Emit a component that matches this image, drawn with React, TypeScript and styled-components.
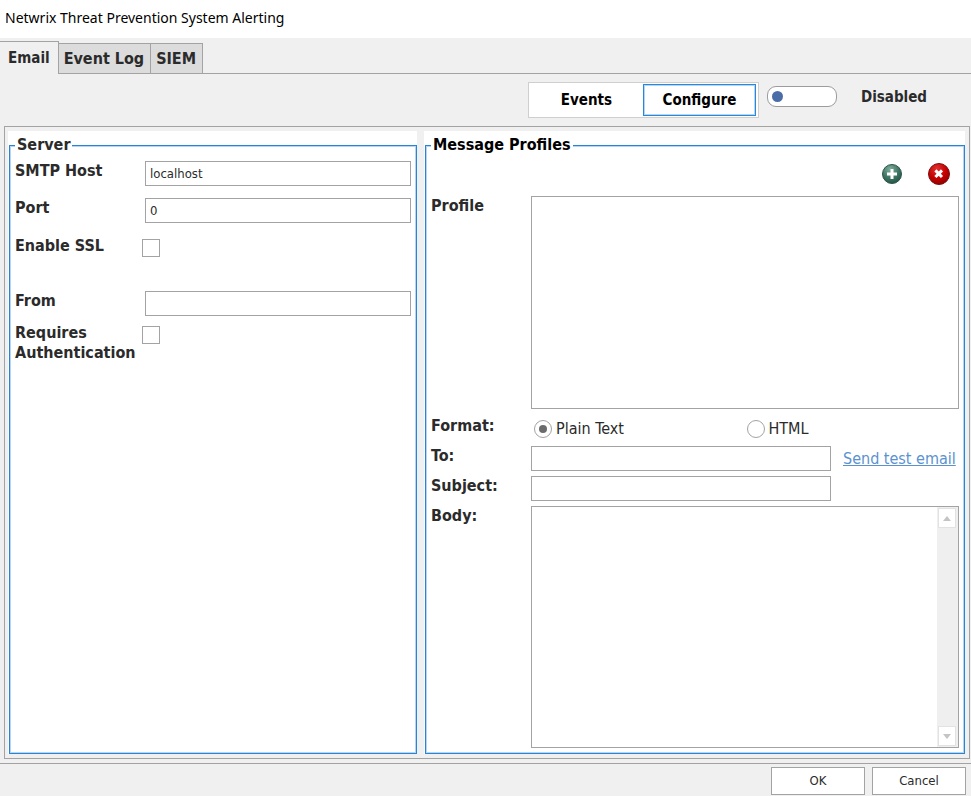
import React, { useState } from "react";
import styled, { createGlobalStyle } from "styled-components";

const GlobalStyle = createGlobalStyle`
  *, *::before, *::after { box-sizing: border-box; }
  html, body, #root { height: 100%; }
  body {
    margin: 0;
    background: #f0f0f0;
    color: #2b2b2b;
    font-family: "DejaVu Sans Condensed", "Noto Sans", sans-serif;
    font-size: 16px;
    line-height: 20px;
  }
  button, input, textarea, select { font: inherit; color: inherit; }
`;

const line = "#a3a3a3";
const blue = "#2a84d2";
const paleBlue = "#b4d6f4";

const Window = styled.div`
  display: flex;
  flex-direction: column;
  min-height: 100%;
`;

const TitleBar = styled.header`
  height: 38px;
  padding: 8px 5px;
  background: #fff;
`;

const Title = styled.h1`
  margin: 0;
  color: #000;
  font: 14px/20px "Noto Sans", sans-serif;
`;

const TabStrip = styled.div`
  display: flex;
  align-items: flex-end;
  height: 36px;
  border-bottom: 1px solid ${line};
`;

const Tab = styled.button<{ $active?: boolean }>`
  height: ${(p) => (p.$active ? 33 : 31)}px;
  margin-bottom: -1px;
  padding: ${(p) => (p.$active ? "0 8px 0" : "1px 6px 0 5px")};
  border: 1px solid ${line};
  border-left-width: ${(p) => (p.$active ? 0 : 1)}px;
  border-bottom-color: ${(p) => (p.$active ? "#f0f0f0" : line)};
  background: ${(p) => (p.$active ? "#f0f0f0" : "#dcdcdc")};
  font-size: ${(p) => (p.$active ? 15 : 16)}px;
  font-weight: bold;

  & + & { margin-left: -1px; }
`;

const Toolbar = styled.div`
  display: flex;
  align-items: flex-start;
  justify-content: flex-end;
  height: 52px;
  padding: 8px 44px 0 0;
  font-size: 15px;
`;

const Segments = styled.div`
  display: flex;
  height: 36px;
  padding: 1px 2px 1px 1px;
  border: 1px solid #cfcfcf;
  background: #fff;
`;

const Segment = styled.button<{ $active?: boolean }>`
  width: 113px;
  padding: 0;
  border: 1px solid ${(p) => (p.$active ? "#2b86d9" : "transparent")};
  box-shadow: inset 0 0 0 1px ${(p) => (p.$active ? paleBlue : "transparent")};
  background: #fff;
  color: #000;
  font-weight: bold;
`;

const SwitchLabel = styled.label`
  display: flex;
  align-items: center;
  gap: 24px;
  margin: 4px 0 0 8px;
  font-weight: bold;
`;

const Switch = styled.input`
  appearance: none;
  width: 70px;
  height: 21px;
  margin: 0;
  padding: 4px;
  border: 1px solid #9c9c9c;
  border-radius: 9px;
  background: #fff;

  &::before {
    content: "";
    display: block;
    width: 11px;
    height: 11px;
    border-radius: 50%;
    background: #4a6da7;
  }
  &:checked::before { margin-left: auto; }
`;

const Panels = styled.main`
  flex: 1;
  display: grid;
  grid-template-columns: 409fr 541fr;
  gap: 7px;
  margin: 0 1px 4px 4px;
  padding: 4px 4px 4px 3px;
  border: 1px solid ${line};
`;

const Panel = styled.section`
  display: flex;
  min-width: 0;
  padding: 4px 0 0 1px;
  background: #fff;
`;

const Group = styled.fieldset`
  flex: 1;
  min-width: 0;
  display: flex;
  flex-direction: column;
  margin: 0;
  padding: 6px 5px 5px;
  border: 1px solid ${blue};
  box-shadow: inset 0 0 0 1px ${paleBlue};
`;

const Legend = styled.legend<{ $strong?: boolean }>`
  padding: 0 2px;
  background: #fff;
  color: ${(p) => (p.$strong ? "#000" : "#2b2b2b")};
  font-weight: bold;
`;

const FieldGrid = styled.div`
  display: grid;
  grid-template-columns: 128px 1fr;
  column-gap: 2px;
  grid-template-rows: 37px 38px 55px 32px 40px;
  align-items: start;
`;

const FieldLabel = styled.label`
  font-weight: bold;
`;

const TextField = styled.input`
  width: 100%;
  min-width: 0;
  height: 25px;
  padding: 0 4px;
  border: 1px solid ${line};
  border-radius: 0;
  background: #fff;
  font-size: 13px;
`;

const CheckBox = styled.input`
  appearance: none;
  width: 18px;
  height: 18px;
  margin: 3px 0 0 -3px;
  border: 1px solid ${line};
  background: #fff;

  &:checked { background: #6b6b6b; box-shadow: inset 0 0 0 3px #fff; }
`;

const ProfileActions = styled.div`
  display: flex;
  justify-content: flex-end;
  gap: 23px;
  padding: 1px 8px 0 0;
  height: 35px;
`;

const IconButton = styled.button`
  display: block;
  width: 24px;
  height: 24px;
  padding: 0;
  border: 0;
  background: none;
`;

const ProfileGrid = styled.div`
  flex: 1;
  display: grid;
  grid-template-columns: 100px 1fr 128px;
  grid-template-rows: 220px 30px 30px 30px minmax(120px, 1fr);
  align-items: start;
`;

const ProfileList = styled.select`
  grid-column: 2 / -1;
  width: 100%;
  height: 213px;
  border: 1px solid ${line};
  border-radius: 0;
  background: #fff;
`;

const RadioRow = styled.div`
  grid-column: 2 / -1;
  display: grid;
  grid-template-columns: 1fr 1fr;
  padding: 3px 0 0 3px;
`;

const RadioLabel = styled.label`
  display: flex;
  align-items: center;
  gap: 4px;
`;

const Radio = styled.input`
  appearance: none;
  display: grid;
  place-items: center;
  width: 18px;
  height: 18px;
  margin: 0;
  border: 1px solid ${line};
  border-radius: 50%;
  background: #fff;

  &:checked::before {
    content: "";
    width: 8px;
    height: 8px;
    border-radius: 50%;
    background: #6b6b6b;
  }
`;

const TestLink = styled.a`
  padding: 3px 0 0 12px;
  color: #5a92cf;
  white-space: nowrap;
`;

const BodyBox = styled.div`
  grid-column: 2 / -1;
  align-self: stretch;
  display: flex;
  border: 1px solid ${line};
  background: #fff;
`;

const BodyText = styled.textarea`
  flex: 1;
  min-width: 0;
  padding: 4px;
  border: 0;
  outline: 0;
  resize: none;
  background: #fff;
`;

const ScrollTrack = styled.div`
  display: flex;
  flex-direction: column;
  justify-content: space-between;
  width: 21px;
  padding: 1px;
  background: #efefef;
`;

const ScrollButton = styled.button`
  display: grid;
  place-items: center;
  width: 18px;
  height: 20px;
  padding: 0;
  border: 1px solid #e2e2e2;
  background: #fff;
`;

const Footer = styled.footer`
  display: flex;
  justify-content: flex-end;
  gap: 7px;
  padding: 3px 5px 1px;
  border-top: 1px solid ${line};
`;

const DialogButton = styled.button`
  width: 94px;
  height: 28px;
  padding: 0;
  border: 1px solid ${line};
  background: #fff;
  font-size: 13px;
`;

const AddIcon = () => (
  <svg width="24" height="24" viewBox="0 0 24 24" aria-hidden="true">
    <defs>
      <radialGradient id="addFill" cx="40%" cy="25%" r="75%">
        <stop offset="0" stopColor="#7fae9c" />
        <stop offset="0.6" stopColor="#3f7464" />
        <stop offset="1" stopColor="#25584a" />
      </radialGradient>
    </defs>
    <circle cx="12" cy="12" r="9.5" fill="url(#addFill)" stroke="#2c5548" />
    <path d="M12 7v10M7 12h10" stroke="#fff" strokeWidth="3" />
  </svg>
);

const RemoveIcon = () => (
  <svg width="24" height="24" viewBox="0 0 24 24" aria-hidden="true">
    <defs>
      <radialGradient id="removeFill" cx="40%" cy="25%" r="75%">
        <stop offset="0" stopColor="#e03030" />
        <stop offset="0.6" stopColor="#c50000" />
        <stop offset="1" stopColor="#950000" />
      </radialGradient>
    </defs>
    <circle cx="12" cy="12" r="10.5" fill="url(#removeFill)" stroke="#7c1010" />
    <path d="M8.4 8.4l6.6 6.6M15 8.4l-6.6 6.6" stroke="#fff" strokeWidth="3" />
  </svg>
);

const Arrow = ({ down }: { down?: boolean }) => (
  <svg width="8" height="5" viewBox="0 0 8 5" aria-hidden="true">
    <path d={down ? "M0 0h8L4 5z" : "M0 5h8L4 0z"} fill="#c4c4c4" />
  </svg>
);

export default function App() {
  const [format, setFormat] = useState("plain");
  return (
    <>
      <GlobalStyle />
      <Window>
        <TitleBar>
          <Title>Netwrix Threat Prevention System Alerting</Title>
        </TitleBar>
        <TabStrip role="tablist">
          <Tab role="tab" aria-selected="true" $active>Email</Tab>
          <Tab role="tab" aria-selected="false">Event Log</Tab>
          <Tab role="tab" aria-selected="false">SIEM</Tab>
        </TabStrip>
        <Toolbar>
          <Segments>
            <Segment>Events</Segment>
            <Segment $active>Configure</Segment>
          </Segments>
          <SwitchLabel>
            <Switch type="checkbox" role="switch" />
            Disabled
          </SwitchLabel>
        </Toolbar>
        <Panels>
          <Panel>
            <Group>
              <Legend>Server</Legend>
              <FieldGrid>
                <FieldLabel htmlFor="host">SMTP Host</FieldLabel>
                <TextField id="host" type="text" defaultValue="localhost" />
                <FieldLabel htmlFor="port">Port</FieldLabel>
                <TextField id="port" type="text" defaultValue="0" />
                <FieldLabel htmlFor="ssl">Enable SSL</FieldLabel>
                <CheckBox id="ssl" type="checkbox" />
                <FieldLabel htmlFor="from">From</FieldLabel>
                <TextField id="from" type="text" />
                <FieldLabel htmlFor="auth">Requires Authentication</FieldLabel>
                <CheckBox id="auth" type="checkbox" />
              </FieldGrid>
            </Group>
          </Panel>
          <Panel>
            <Group>
              <Legend $strong>Message Profiles</Legend>
              <ProfileActions>
                <IconButton type="button" aria-label="Add profile"><AddIcon /></IconButton>
                <IconButton type="button" aria-label="Remove profile"><RemoveIcon /></IconButton>
              </ProfileActions>
              <ProfileGrid>
                <FieldLabel htmlFor="profile">Profile</FieldLabel>
                <ProfileList id="profile" size={10} />
                <FieldLabel as="span" id="format">Format:</FieldLabel>
                <RadioRow role="radiogroup" aria-labelledby="format">
                  <RadioLabel>
                    <Radio type="radio" name="format" checked={format === "plain"} onChange={() => setFormat("plain")} />
                    Plain Text
                  </RadioLabel>
                  <RadioLabel>
                    <Radio type="radio" name="format" checked={format === "html"} onChange={() => setFormat("html")} />
                    HTML
                  </RadioLabel>
                </RadioRow>
                <FieldLabel htmlFor="to">To:</FieldLabel>
                <TextField id="to" type="text" />
                <TestLink href="#test">Send test email</TestLink>
                <FieldLabel htmlFor="subject">Subject:</FieldLabel>
                <TextField id="subject" type="text" />
                <span />
                <FieldLabel htmlFor="body">Body:</FieldLabel>
                <BodyBox>
                  <BodyText id="body" />
                  <ScrollTrack>
                    <ScrollButton type="button" aria-label="Scroll up"><Arrow /></ScrollButton>
                    <ScrollButton type="button" aria-label="Scroll down"><Arrow down /></ScrollButton>
                  </ScrollTrack>
                </BodyBox>
              </ProfileGrid>
            </Group>
          </Panel>
        </Panels>
        <Footer>
          <DialogButton type="button">OK</DialogButton>
          <DialogButton type="button">Cancel</DialogButton>
        </Footer>
      </Window>
    </>
  );
}
